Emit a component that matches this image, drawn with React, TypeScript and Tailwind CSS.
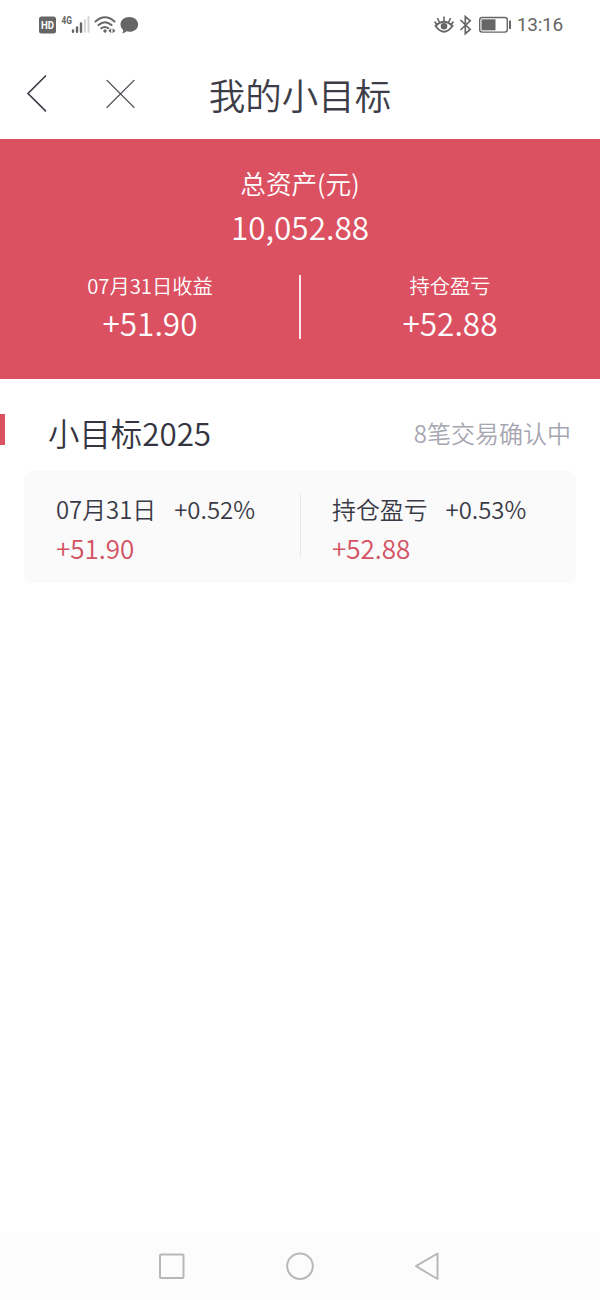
import React from "react";

function StatusBar() {
  return (
    <header className="flex h-[50px] shrink-0 items-center justify-between pr-[37px] pl-[39px] text-[#666666]">
      <svg width="102" height="24" viewBox="39 13 102 24" fill="none">
        <rect x="39" y="16.5" width="17" height="17" rx="2.5" fill="#666666" />
        <text x="41" y="29" fontFamily="Roboto, sans-serif" fontWeight="700" fontSize="11" textLength="13" lengthAdjust="spacingAndGlyphs" fill="#fff">HD</text>
        <text x="61.5" y="23.5" fontFamily="Roboto, sans-serif" fontWeight="700" fontSize="10" textLength="10.5" lengthAdjust="spacingAndGlyphs" fill="#666666">4G</text>
        <path d="M73 30.5v1.2M77 27.5v4.2M81 23.5v8.2" stroke="#666666" strokeWidth="2.4" strokeLinecap="round" />
        <path d="M84.900 20v11.700M88.500 17v14.700" stroke="#d4d4d4" strokeWidth="2" strokeLinecap="round" />
        <path d="M95.500 21.500q9.500-8.400 19 0M98.500 25q6.500-5.600 13 0M101.300 28.300q3.500-2.700 7 0" stroke="#666666" strokeWidth="2" strokeLinecap="round" />
        <circle cx="105" cy="31" r="1.700" fill="#666666" />
        <path d="M111.200 28.200v5l-2.900-2.500zM112.600 28.200v5l2.900-2.500z" fill="#666666" />
        <path d="M129.300 17c5 0 8.800 3.200 8.800 7.400s-3.800 7.300-8.800 7.300c-1 0-2-.1-2.900-.4-1 .9-2.300 1.700-4.200 1.900.8-1.200 1.100-2.300 1-3.300-1.700-1.400-2.700-3.300-2.700-5.500 0-4.200 3.800-7.400 8.800-7.400z" fill="#666666" />
      </svg>
      <div className="flex items-center gap-[4px]">
        <svg width="79" height="24" viewBox="434 13 79 24" fill="none" stroke="#666666">
          <path d="M435.500 26q8.500-8.500 17 0q-8.500 11.500-17 0z" strokeWidth="1.900" strokeLinejoin="round" />
          <circle cx="444" cy="26.300" r="3.300" fill="#666666" stroke="none" />
          <path d="M444 21.500v-5M439.300 22l-1.900-4M448.700 22l1.900-4M436.500 24.500l-1.800-3M451.500 24.500l1.800-3" strokeWidth="1.600" />
          <path d="M460.500 20l9.700 9.500-4.900 4.200v-17l4.900 4.200-9.700 9.100" strokeWidth="1.700" />
          <rect x="479.700" y="17.500" width="27.600" height="14.600" rx="2.500" strokeWidth="1.400" />
          <rect x="481.500" y="19.300" width="14" height="11" fill="#666666" stroke="none" />
          <path d="M510 20.500v8.500" strokeWidth="2" />
        </svg>
        <time className="font-['Roboto',sans-serif] text-[19px] leading-6 font-normal tracking-[-0.2px]">13:16</time>
      </div>
    </header>
  );
}

function TitleBar() {
  return (
    <nav className="relative flex h-[89px] shrink-0 items-center justify-center">
      <svg className="absolute top-[20px] left-[20px]" width="120" height="48" viewBox="20 70 120 48" fill="none" stroke="#3f3f49">
        <path d="M45.500 76L28 93.500l17.500 17.300" strokeWidth="1.700" strokeLinecap="round" />
        <path d="M107 80.300l27 27M134 80.300L107 107.300" strokeWidth="1.200" strokeLinecap="round" />
      </svg>
      <h1 className="text-[36.500px] leading-[54px] font-[350] text-[#3d3d47]">我的小目标</h1>
    </nav>
  );
}

function SummaryItem({ label, value }: { label: string; value: string }) {
  return (
    <div className="flex flex-1 flex-col items-center">
      <span className="text-[20.300px] leading-[26px]">{label}</span>
      <span className="mt-px text-[31.500px] leading-[46px]">{value}</span>
    </div>
  );
}

function Summary() {
  return (
    <section className="flex h-[240px] shrink-0 flex-col items-center bg-[#db5161] pt-[26px] text-white">
      <p className="text-[25.600px] leading-[36px]">总资产(元)</p>
      <p className="mt-px text-[31.500px] leading-[48px]">10,052.88</p>
      <div className="mt-[22px] flex w-full">
        <SummaryItem label="07月31日收益" value="+51.90" />
        <div className="-mx-px mt-[3px] h-[64px] w-0.5 bg-[#fbe6e8]" />
        <SummaryItem label="持仓盈亏" value="+52.88" />
      </div>
    </section>
  );
}

function GoalItem({ label, rate, value }: { label: string; rate: string; value: string }) {
  return (
    <div className="flex flex-1 flex-col pt-[20px] pl-[32px]">
      <div className="flex gap-[18px] text-[23.900px] leading-[36px] text-[#3a3a47]">
        <span>{label}</span>
        <span>{rate}</span>
      </div>
      <span className="mt-[2px] text-[26px] leading-[38px] text-[#d35263]">{value}</span>
    </div>
  );
}

function Goal() {
  return (
    <section className="flex flex-1 flex-col">
      <div className="mt-[34px] flex h-[40px] items-center justify-between pr-[29px]">
        <div className="flex items-center">
          <div className="mb-[8px] h-[31px] w-[5px] bg-[#db5161]" />
          <h2 className="ml-[43px] text-[31.400px] leading-[40px] text-[#35353f]">小目标2025</h2>
        </div>
        <span className="text-[24px] leading-[36px] text-[#a6a6b1]">8笔交易确认中</span>
      </div>
      <div className="mx-[24px] mt-[18px] flex h-[112px] rounded-lg bg-[#fafafa]">
        <GoalItem label="07月31日" rate="+0.52%" value="+51.90" />
        <div className="mt-[22px] -mr-px h-[64px] w-px bg-[#e8e8eb]" />
        <GoalItem label="持仓盈亏" rate="+0.53%" value="+52.88" />
      </div>
    </section>
  );
}

function NavigationBar() {
  return (
    <footer className="flex h-[68px] shrink-0 items-center justify-center bg-[#fcfcfc]">
      <svg width="284" height="32" viewBox="158 1250 284 32" fill="none" stroke="#b8b8b8" strokeWidth="2" strokeLinejoin="round">
        <rect x="160" y="1254.500" width="23.500" height="23.500" rx="1" />
        <circle cx="300" cy="1266.200" r="12.800" />
        <path d="M437.500 1253.500v25.500L416 1266.200z" />
      </svg>
    </footer>
  );
}

export default function App() {
  return (
    <main className="flex h-[1300px] w-[600px] flex-col overflow-hidden bg-white font-['Noto_Sans_CJK_SC',sans-serif] font-[350]">
      <StatusBar />
      <TitleBar />
      <Summary />
      <Goal />
      <NavigationBar />
    </main>
  );
}
